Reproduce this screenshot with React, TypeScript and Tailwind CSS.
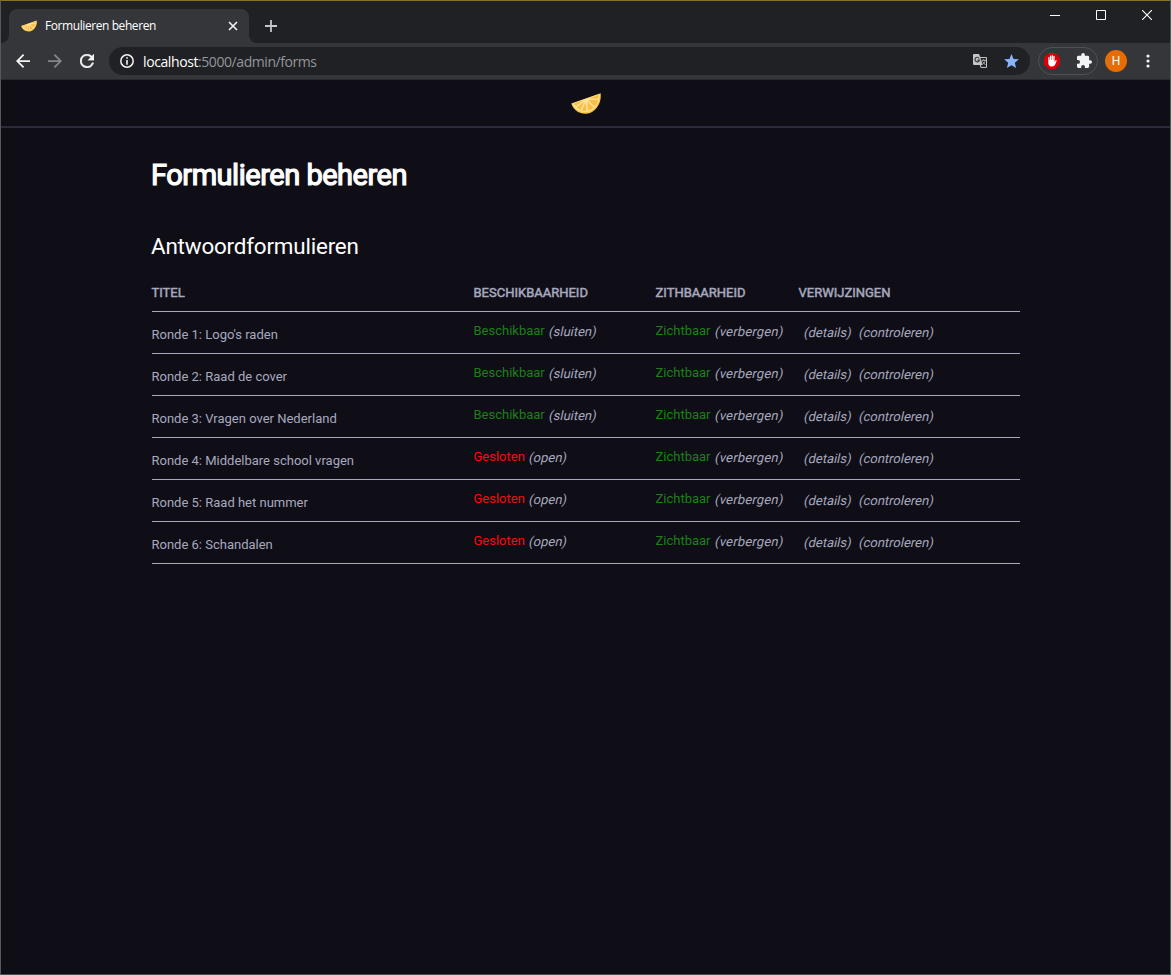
import React from "react";

const rows = [
  { title: "Ronde 1: Logo's raden", open: true },
  { title: "Ronde 2: Raad de cover", open: true },
  { title: "Ronde 3: Vragen over Nederland", open: true },
  { title: "Ronde 4: Middelbare school vragen", open: false },
  { title: "Ronde 5: Raad het nummer", open: false },
  { title: "Ronde 6: Schandalen", open: false },
];

function Lemon({ className }: { className: string }) {
  return (
    <svg viewBox="0 0 30 21" className={className}>
      <path d="M0.3 10.5 L29.6 0.3 C31 9 25 20 15 20.7 C7 21 2 16 0.3 10.5Z" fill="#f3c84b" />
      <path d="M1.2 10.5 L28.4 1 C29.6 9 24 18.2 15.2 18.9 C8 19.3 3 15.5 1.2 10.5Z" fill="#fde397" />
      <g fill="#fcbd47">
        <path d="M2.4 10.7 L12.5 7.3 L5 13Z" />
        <path d="M6 14.2 L13.2 8.8 L9.4 16.9Q7.2 16 6 14.2Z" />
        <path d="M10.9 17.4 L14.5 9.2 L15.6 17.9Q13 18.1 10.9 17.4Z" />
        <path d="M17.2 17.6 L16 8.7 L22.7 14.6Q20 17 17.2 17.6Z" />
        <path d="M23.8 13.5 L17 7.2 L27.1 6.8Q26.4 11.2 23.8 13.5Z" />
        <path d="M27.3 5.4 L18 5.4 L27.4 2Q27.7 3.5 27.3 5.4Z" />
      </g>
    </svg>
  );
}

function TabStrip() {
  return (
    <div className="flex h-[42px] items-start bg-[#202124]">
      <div className="relative ml-2 mt-2 flex h-[34px] w-[240px] items-center rounded-t-lg bg-[#35363a]">
        <svg viewBox="0 0 8 8" className="absolute -left-2 bottom-0 size-2">
          <path d="M8 0v8H0a8 8 0 0 0 8-8Z" fill="#35363a" />
        </svg>
        <svg viewBox="0 0 8 8" className="absolute -right-2 bottom-0 size-2">
          <path d="M0 0v8h8a8 8 0 0 1-8-8Z" fill="#35363a" />
        </svg>
        <Lemon className="ml-3 h-3 w-4" />
        <span className="ml-2 w-[183px] whitespace-nowrap font-['Open_Sans',sans-serif] text-[12px] tracking-[-0.42px] text-white">
          Formulieren beheren
        </span>
        <svg viewBox="0 0 10 10" className="size-[10px] shrink-0" stroke="#f1f3f4" strokeWidth="1.6">
          <path d="M1 1l8 8M9 1l-8 8" />
        </svg>
      </div>
      <svg viewBox="0 0 12 12" className="ml-4 mt-[19px] size-3" stroke="#c4c6c9" strokeWidth="1.8">
        <path d="M6 0v12M0 6h12" />
      </svg>
      <div className="ml-auto flex h-7 items-center">
        <svg viewBox="0 0 10 10" className="mr-9 size-[10px]"><path d="M0 5h10v1H0z" fill="#fff" /></svg>
        <svg viewBox="0 0 10 10" className="mr-9 size-[10px]"><path d="M.5.5h9v9h-9z" fill="none" stroke="#fff" /></svg>
        <svg viewBox="0 0 10 10" className="mr-[18px] size-[10px]"><path d="M0 0l10 10M10 0L0 10" stroke="#fff" strokeWidth="1.1" /></svg>
      </div>
    </div>
  );
}

function Toolbar() {
  return (
    <div className="flex h-[37px] items-center border-b border-[#28292c] bg-[#35363a]">
      <svg viewBox="4 4 16 16" className="ml-[15px] size-[14px]" fill="#f4f5f6">
        <path d="M20 11H7.83l5.59-5.59L12 4l-8 8 8 8 1.41-1.41L7.83 13H20v-2z" />
      </svg>
      <svg viewBox="4 4 16 16" className="ml-[18px] size-[14px]" fill="#84868a">
        <path d="M12 4l-1.41 1.41L16.17 11H4v2h12.17l-5.58 5.59L12 20l8-8z" />
      </svg>
      <svg viewBox="4 4 16 16" className="ml-[18px] size-[14px]" fill="#f4f5f6" stroke="#f4f5f6" strokeWidth=".4">
        <path d="M17.65 6.35A7.96 7.96 0 0 0 12 4a8 8 0 1 0 7.73 10h-2.08A6 6 0 1 1 12 6c1.66 0 3.14.69 4.22 1.78L13 11h7V4l-2.35 2.35z" />
      </svg>
      <div className="ml-[15px] flex h-7 w-[921px] items-center rounded-full bg-[#202124]">
        <svg viewBox="0 0 14 14" className="ml-[11px] size-[14px]">
          <circle cx="7" cy="7" r="6.2" fill="none" stroke="#f1f3f4" strokeWidth="1.5" />
          <path d="M6.2 3.2h1.6v1.6H6.2zM6.2 6h1.6v4.8H6.2z" fill="#f1f3f4" />
        </svg>
        <span className="ml-[9px] whitespace-nowrap font-['Open_Sans',sans-serif] text-[14px] text-[#94979b]">
          <span className="tracking-[-0.4px] text-white">localhost</span>
          <span className="tracking-[-0.43px]">:5000/admin/forms</span>
        </span>
        <svg viewBox="0 0 14 14" className="ml-auto size-[14px]">
          <path d="M6 3.5h7.5v9.9H7.8z" fill="none" stroke="#c3c5c7" />
          <path d="M1 0h5l1 2.5 2.6 8.5H1a1 1 0 0 1-1-1V1a1 1 0 0 1 1-1z" fill="#c3c5c7" />
          <path d="M6.2 4.3A2.3 2.3 0 1 0 6.5 6.1H4.4" fill="none" stroke="#3b3c3f" strokeWidth="1.2" />
          <path d="M8.3 6.3H13M10.8 5.2v1.1M12.3 6.3c-.5 2-1.8 3.3-3 4M9.5 7.5l3 3.5" fill="none" stroke="#b5b7b9" strokeWidth=".9" />
        </svg>
        <svg viewBox="2 2 20 19" className="ml-[17px] mr-[11px] h-[14px] w-[15px]" fill="#8ab4f8">
          <path d="M12 17.27L18.18 21l-1.64-7.03L22 9.24l-7.19-.61L12 2 9.19 8.63 2 9.24l5.46 4.73L5.82 21z" />
        </svg>
      </div>
      <div className="ml-2 flex h-7 w-[60px] items-center rounded-full border border-[#505155]">
        <svg viewBox="0 0 16 16" className="ml-[5px] size-4">
          <path d="M4.7 0h6.6L16 4.7v6.6L11.3 16H4.7L0 11.3V4.7z" fill="#d90007" />
          <path d="M4.3 8V4.3q.6-.7 1.2 0V7h.4V3q.6-.8 1.3 0v4h.4V2.4q.6-.6 1.3 0V7h.4V3.2q.6-.7 1.3 0V9l1-1.7q.8-.4 1.2.3l-1.7 4.2Q10 13.7 8 13.6 4.7 13.5 4.3 10.4z" fill="#fff" />
        </svg>
        <svg viewBox="2 1 21 21" className="mb-px ml-[17px] size-[15px]" fill="#f1f3f4">
          <path d="M20.5 11H19V7a2 2 0 0 0-2-2h-4V3.5a2.5 2.5 0 0 0-5 0V5H4a2 2 0 0 0-2 2v3.8h1.5a2.7 2.7 0 0 1 0 5.4H2V20a2 2 0 0 0 2 2h3.8v-1.5a2.7 2.7 0 0 1 5.4 0V22H17a2 2 0 0 0 2-2v-4h1.5a2.5 2.5 0 0 0 0-5z" />
        </svg>
      </div>
      <div className="ml-[7px] flex size-[22px] items-center justify-center rounded-full bg-[#e86c00] font-['Roboto',sans-serif] text-[12px] text-white">H</div>
      <svg viewBox="0 0 4 14" className="ml-[19px] h-[14px] w-1" fill="#f1f3f4">
        <circle cx="2" cy="2" r="1.6" />
        <circle cx="2" cy="7" r="1.6" />
        <circle cx="2" cy="12" r="1.6" />
      </svg>
    </div>
  );
}

const grid = "grid grid-cols-[322px_182px_143px_1fr] border-b border-[#a9a8bd]";

export default function App() {
  return (
    <div className="flex h-[975px] w-[1171px] flex-col border-x border-b border-t border-b-[#4f4a50] border-l-[#55595a] border-r-[#55595a] border-t-[#86702c] bg-[#0f0e17]">
      <TabStrip />
      <Toolbar />
      <header className="flex h-12 justify-center border-b-2 border-[#2b2a37]">
        <Lemon className="mt-[13px] h-[21px] w-[30px]" />
      </header>
      <main className="ml-[151px] w-[868px] font-['Roboto',sans-serif] text-[13px] leading-5 text-[#a7a9be]">
        <h1 className="-ml-px mt-[27px] h-10 text-[29px] leading-10 tracking-[-0.48px] text-[#fffffe] [-webkit-text-stroke:1.2px_#fffffe]">
          Formulieren beheren
        </h1>
        <h2 className="-ml-px mt-[35px] h-8 text-[22.4px] leading-8 tracking-[-0.18px] text-[#fffffe]">Antwoordformulieren</h2>
        <div className={grid + " h-[50px] [-webkit-text-stroke:0.5px_#a7a9be]"}>
          <span className="-ml-[0.5px] mt-[21px]">TITEL</span>
          <span className="-ml-[0.5px] mt-[21px]">BESCHIKBAARHEID</span>
          <span className="-ml-[0.5px] mt-[21px]">ZITHBAARHEID</span>
          <span className="-ml-[0.5px] mt-[21px]">VERWIJZINGEN</span>
        </div>
        {rows.map((row) => (
          <div key={row.title} className={grid + " h-[42px]"}>
            <span className="-ml-[0.5px] mt-[13px]">{row.title}</span>
            <span className="-ml-[0.5px] mt-[9px] flex gap-[3px]">
              <span className={row.open ? "text-[#1b8015]" : "text-[#fa0a0a]"}>{row.open ? "Beschikbaar" : "Gesloten"}</span>
              <em className="mt-px -skew-x-12 not-italic">{row.open ? "(sluiten)" : "(open)"}</em>
            </span>
            <span className="-ml-[0.5px] mt-[9px] flex gap-[3px]">
              <span className="text-[#1b8015]">Zichtbaar</span>
              <em className="mt-px -skew-x-12 not-italic tracking-[0.18px]">(verbergen)</em>
            </span>
            <span className="-ml-[0.5px] mt-[11px] flex gap-2 pl-1">
              <em className="-skew-x-12 not-italic">(details)</em>
              <em className="-skew-x-12 not-italic">(controleren)</em>
            </span>
          </div>
        ))}
      </main>
    </div>
  );
}
